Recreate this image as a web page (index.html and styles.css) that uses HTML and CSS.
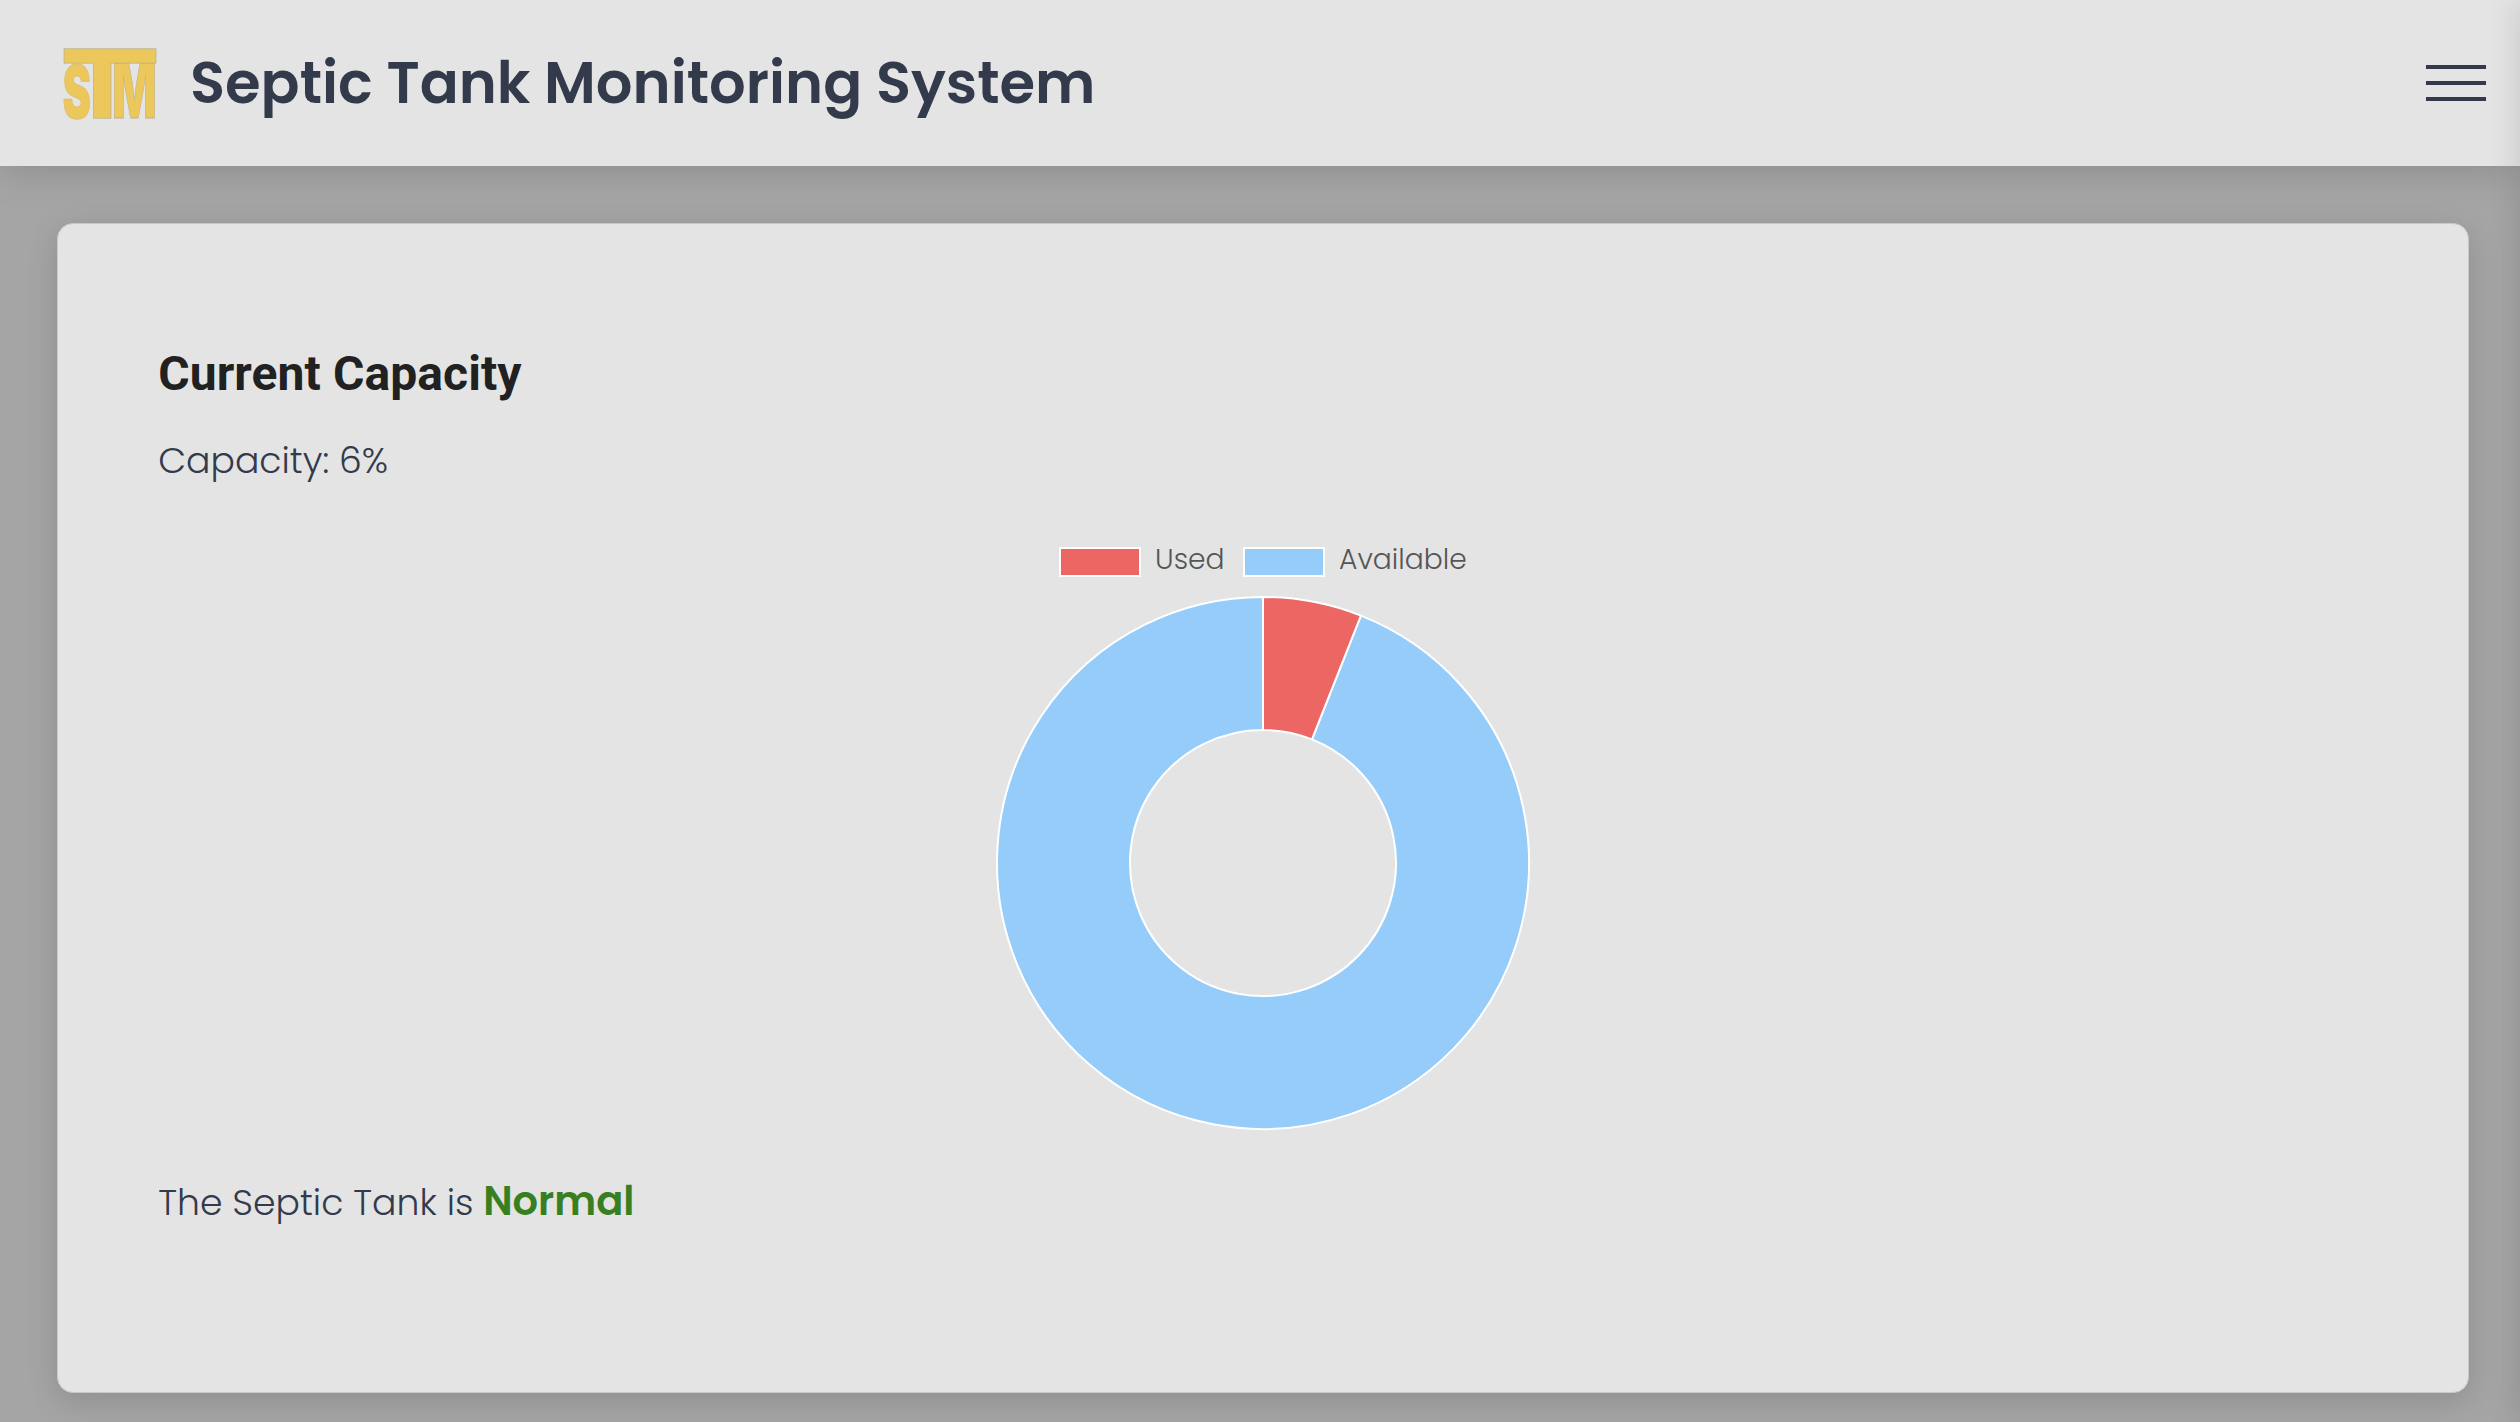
FILE: index.html
```html
<!DOCTYPE html>
<html lang="en">
<head>
<meta charset="utf-8">
<title>Septic Tank Monitoring System</title>
<link rel="stylesheet" href="styles.css">
</head>
<body>
<header class="topbar">
  <svg class="logo" width="94" height="72" viewBox="0 0 94 72" role="img" aria-label="STM">
    <text class="logo-letter heavy" transform="translate(-.3 70.8) scale(.58 1)" font-size="72.500">S</text>
    <text class="logo-letter" transform="translate(49 71.3) scale(.625 1)" font-size="75">M</text>
    <path class="logo-bar" d="M1 1.700H93V16.200H48V71.300H30.500V16.200H1Z"/>
  </svg>
  <h1 class="brand">Septic Tank Monitoring System</h1>
  <button class="menu" aria-label="Menu"><span></span><span></span><span></span></button>
</header>
<main class="content">
  <section class="card">
    <h2 class="heading">Current Capacity</h2>
    <p class="capacity">Capacity: 6%</p>
    <div class="legend">
      <span class="swatch used"></span><span class="label label-used">Used</span>
      <span class="swatch available"></span><span class="label label-available">Available</span>
    </div>
    <svg class="donut" width="536" height="536" viewBox="-268 -268 536 536">
      <path class="slice available" d="M97.920 -247.320A266 266 0 1 1 0 -266V-133A133 133 0 1 0 48.960 -123.660Z"/>
      <path class="slice used" d="M0 -266A266 266 0 0 1 97.920 -247.320L48.960 -123.660A133 133 0 0 0 0 -133Z"/>
    </svg>
    <p class="status"><span class="status-text">The Septic Tank is</span><strong>Normal</strong></p>
  </section>
</main>
<aside class="drawer"></aside>
</body>
</html>
```
FILE: styles.css
```css
* { box-sizing: border-box; }
html, body { height: 100%; overflow: hidden; }
body {
  margin: 0;
  background: #a5a5a5;
  color: #323a4b;
  font-family: Poppins, Inter, sans-serif;
}
h1, h2, p { margin: 0; white-space: nowrap; }
.topbar {
  position: relative;
  display: flex;
  align-items: center;
  height: 166px;
  padding: 0 34px 0 63px;
  background: #e4e4e4;
  box-shadow: 0 0 40px rgba(0, 0, 0, .18);
}
.logo { display: block; overflow: visible; }
.logo-letter, .logo-bar { fill: #ecc75c; stroke: #b9b294; stroke-width: .8; }
.logo-letter { font-family: Inter, sans-serif; font-weight: 900; }
.logo-letter.heavy { stroke: #e2c26a; stroke-width: 1.6; }
.brand {
  margin-left: 33px;
  font-size: 57.6px;
  font-weight: 600;
  line-height: 80px;
}
.menu {
  display: flex;
  flex-direction: column;
  gap: 12px;
  margin-left: auto;
  padding: 0;
  border: 0;
  background: none;
}
.menu span { width: 60px; height: 4px; background: #323a4b; }
.content { padding: 57px 51.4px 29px 57.4px; }
.card {
  display: flex;
  flex-direction: column;
  height: 1170px;
  padding: 114px 99.800px 0;
  background: #e4e4e4;
  border: 1px solid #c8c8c8;
  border-radius: 16px;
  box-shadow: 0 8px 32px rgba(0, 0, 0, .14);
}
.heading {
  height: 72px;
  color: #212121;
  font: 700 48px/72px Roboto, sans-serif;
  letter-spacing: .09px;
}
.capacity { height: 54px; margin-top: 24px; font-size: 36.200px; font-weight: 300; line-height: 54px; }
.legend {
  display: flex;
  align-items: center;
  align-self: center;
  height: 42px;
  margin-top: 50px;
  color: #565656;
  font-size: 28.200px;
  font-weight: 300;
}
.swatch { width: 82px; height: 30px; margin-top: 6px; border: 2px solid #fff; }
.swatch.used { background: #ec6663; }
.swatch.available { background: #95ccfa; }
.label { margin-left: 14px; line-height: 42px; white-space: nowrap; }
.label-used { width: 88px; }
.label-available { width: 128px; }
.donut { display: block; align-self: center; margin-top: 15px; }
.slice { stroke: #fff; stroke-width: 2; stroke-linejoin: round; }
.slice.used { fill: #ec6663; }
.slice.available { fill: #95ccfa; }
.status { display: flex; align-items: baseline; height: 60px; margin-top: 40px; font-size: 36.200px; font-weight: 300; line-height: 60px; }
.status-text { width: 325px; }
.status strong { color: #377f21; font-size: 40px; font-weight: 600; }
/* closed side menu: only its shadow reaches into the page */
.drawer {
  position: fixed;
  top: 0;
  left: 100%;
  width: 400px;
  height: 100%;
  box-shadow: 0 0 32px rgba(0, 0, 0, .14);
}
```
